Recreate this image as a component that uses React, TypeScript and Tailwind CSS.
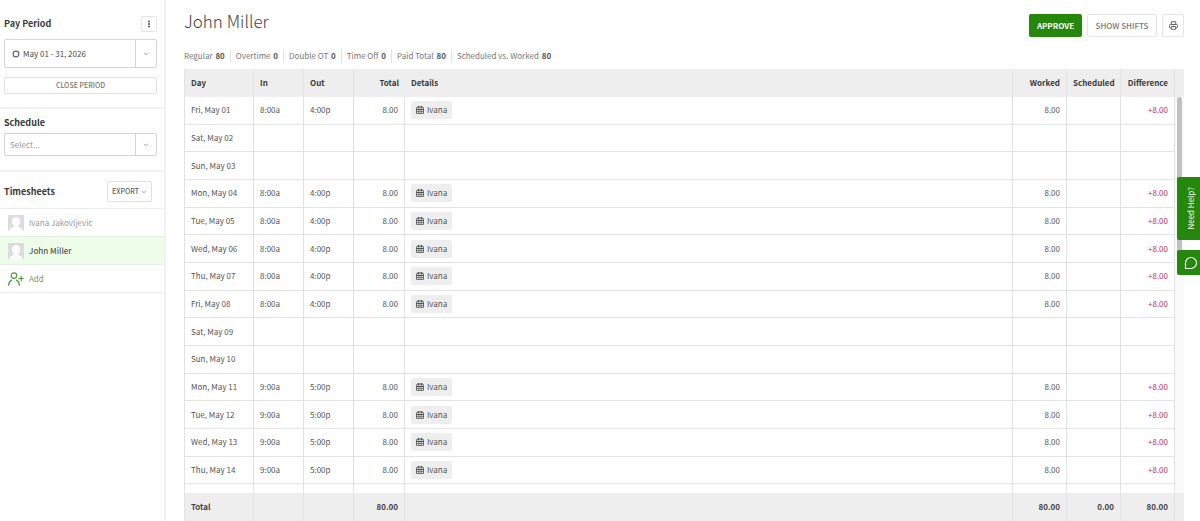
import { ReactNode } from 'react';
import clsx from 'clsx';

type Shift = { day: string; start?: string; end?: string; who?: string };

const SHIFTS: Shift[] = [
  { day: 'Fri, May 01', start: '8:00a', end: '4:00p', who: 'Ivana' },
  { day: 'Sat, May 02' },
  { day: 'Sun, May 03' },
  { day: 'Mon, May 04', start: '8:00a', end: '4:00p', who: 'Ivana' },
  { day: 'Tue, May 05', start: '8:00a', end: '4:00p', who: 'Ivana' },
  { day: 'Wed, May 06', start: '8:00a', end: '4:00p', who: 'Ivana' },
  { day: 'Thu, May 07', start: '8:00a', end: '4:00p', who: 'Ivana' },
  { day: 'Fri, May 08', start: '8:00a', end: '4:00p', who: 'Ivana' },
  { day: 'Sat, May 09' },
  { day: 'Sun, May 10' },
  { day: 'Mon, May 11', start: '9:00a', end: '5:00p', who: 'Ivana' },
  { day: 'Tue, May 12', start: '9:00a', end: '5:00p', who: 'Ivana' },
  { day: 'Wed, May 13', start: '9:00a', end: '5:00p', who: 'Ivana' },
  { day: 'Thu, May 14', start: '9:00a', end: '5:00p', who: 'Ivana' },
];

const SUMMARY = [
  ['Regular', '80'],
  ['Overtime', '0'],
  ['Double OT', '0'],
  ['Time Off', '0'],
  ['Paid Total', '80'],
  ['Scheduled vs. Worked', '80'],
];

function Chevron() {
  return (
    <svg viewBox="0 0 6 4" className="h-1 w-1.5" fill="none" stroke="#8a8a8a" strokeWidth="0.8">
      <path d="M1 0.8 3 2.8 5 0.8" />
    </svg>
  );
}

function CalendarIcon() {
  return (
    <svg viewBox="0 0 16 16" className="h-2 w-2" fill="none" stroke="#4a4a4a" strokeWidth="1.6">
      <path d="M1 14.800V4.500a2.500 2.500 0 0 1 2.500-2.500h9A2.500 2.500 0 0 1 15 4.500v10.300z" />
      <path d="M1 6.800h14" strokeWidth="2.200" />
      <path d="M1 10.800h14M5.700 6.500v8.300M10.300 6.500v8.300" strokeWidth="1.300" />
      <path d="M5 0.500v4M11 0.500v4" strokeWidth="2.800" />
    </svg>
  );
}

function PrinterIcon() {
  return (
    <svg viewBox="0 0 18 18" className="h-[9px] w-[9px]" fill="none" stroke="#555" strokeWidth="1.8" strokeLinejoin="round">
      <path d="M4.5 7V1.5h9V7" />
      <path d="M4.5 13.5H3A2 2 0 0 1 1 11.500V9a2 2 0 0 1 2-2h12a2 2 0 0 1 2 2v2.500a2 2 0 0 1-2 2h-1.500" />
      <path d="M4.500 11h9v5.500h-9z" />
    </svg>
  );
}

function Avatar() {
  return (
    <svg viewBox="0 0 16 16" className="h-4 w-4">
      <rect width="16" height="16" fill="#dcdcdc" />
      <path
        d="M8 2c2.600 0 4.200 1.700 4.200 4.200 0 1.900-.8 3.500-1.900 4.300v1c.3 1.200 2.900 1.300 4.100 2.600V16H1.600v-1.900c1.200-1.300 3.800-1.400 4.100-2.600v-1C4.600 9.700 3.800 8.100 3.800 6.200 3.800 3.700 5.400 2 8 2z"
        fill="#fff"
      />
    </svg>
  );
}

function AddUserIcon() {
  return (
    <svg viewBox="0 0 16 14" className="h-3.5 w-4" fill="none" stroke="#4f9638" strokeWidth="1.2" strokeLinecap="round">
      <circle cx="6" cy="3.600" r="2.800" />
      <path d="M0.700 13.300c0-2.700 1.100-4.400 2.900-5.200M11.300 13.300c0-2.700-1.100-4.400-2.900-5.200M13.200 4.300v4.400M11 6.500h4.400" />
    </svg>
  );
}

function SelectBox({ id, value, height, icon, muted }: { id: string; value: string; height: string; icon?: ReactNode; muted?: boolean }) {
  return (
    <div className={clsx('relative flex rounded-xs border border-[#d4d4d4] bg-white', height)}>
      {icon && <span className="pointer-events-none absolute inset-y-0 left-[7px] flex items-center">{icon}</span>}
      <select
        id={id}
        className={clsx('w-full appearance-none bg-transparent pr-6 text-[8px] outline-none', icon ? 'pl-[18px]' : 'pl-[5px]', muted ? 'text-[#999]' : 'text-[#4a4a4a]')}
      >
        <option>{value}</option>
      </select>
      <span className="pointer-events-none absolute inset-y-0 right-0 flex w-[21px] items-center justify-center border-l border-[#d4d4d4]">
        <Chevron />
      </span>
    </div>
  );
}

function Columns() {
  return (
    <colgroup>
      <col className="w-[69px]" />
      <col className="w-[50px]" />
      <col className="w-[50px]" />
      <col className="w-[51px]" />
      <col />
      <col className="w-[54px]" />
      <col className="w-[54px]" />
      <col className="w-[54px]" />
      <col className="w-[9px]" />
    </colgroup>
  );
}

const cell = 'border-r border-[#e2e2e2] px-1.5';

function Sidebar() {
  return (
    <aside className="w-[166px] shrink-0 border-r-2 border-[#f1f1f1] text-[#3a3a3a]">
      <section className="border-b-2 border-[#f1f1f1] pt-4 pr-[7px] pb-[13px] pl-1">
        <div className="flex h-4 items-center justify-between">
          <label htmlFor="period" className="text-[9px] font-bold">Pay Period</label>
          <button aria-label="Pay period options" className="flex h-4 w-4 items-center justify-center rounded-xs border border-[#e4e4e4]">
            <svg viewBox="0 0 2 8" className="h-2 w-0.5" fill="#444">
              <circle cx="1" cy="1.500" r="0.900" />
              <circle cx="1" cy="4" r="0.900" />
              <circle cx="1" cy="6.500" r="0.900" />
            </svg>
          </button>
        </div>
        <div className="mt-[7px]">
          <SelectBox
            id="period"
            value="May 01 - 31, 2026"
            height="h-[29px]"
            icon={
              <svg viewBox="0 0 8 8" className="h-2 w-2" fill="none" stroke="#666" strokeWidth="1.1">
                <circle cx="4" cy="4" r="2.900" />
                <path d="M0.700 6.700h1.300M6 1.300h1.300" strokeWidth="0.500" />
              </svg>
            }
          />
        </div>
        <button className="mt-[9px] h-[17px] w-full rounded-xs border border-[#e0e0e0] text-[7px] leading-none font-medium text-[#777]">
          CLOSE PERIOD
        </button>
      </section>

      <section className="border-b-2 border-[#f1f1f1] pt-2 pr-[7px] pb-3.5 pl-1">
        <label htmlFor="schedule" className="mb-1 block text-[9px] leading-3 font-bold">Schedule</label>
        <SelectBox id="schedule" value="Select..." height="h-[23px]" muted />
      </section>

      <section>
        <div className="flex items-center justify-between pt-[9px] pr-3 pb-1.5 pl-1">
          <h2 className="text-[9px] font-bold">Timesheets</h2>
          <button className="flex h-[21px] w-[45px] items-center justify-center gap-0.5 rounded-xs border border-[#e0e0e0] text-[7px] font-medium text-[#666]">
            EXPORT <Chevron />
          </button>
        </div>
        <ul className="text-[8px]">
          <li className="border-t border-[#ececec]">
            <a href="#ivana" className="flex h-[27px] items-center gap-[5px] pl-2 text-[#999]"><Avatar /> Ivana Jakovljevic</a>
          </li>
          <li className="border-t border-[#e4efe0] bg-[#edfde9]">
            <a href="#john" className="flex h-[27px] items-center gap-[5px] pl-2 font-medium text-[#555]"><Avatar /> John Miller</a>
          </li>
          <li className="border-y border-[#ececec]">
            <a href="#add" className="flex h-[27px] items-center gap-[5px] pl-2 text-[#6aa557]"><AddUserIcon /> Add</a>
          </li>
        </ul>
      </section>
    </aside>
  );
}

function Timesheet() {
  return (
    <div className="flex min-h-0 flex-1 flex-col text-[8px] text-[#555]">
      <table className="w-full shrink-0 table-fixed border-separate border-spacing-0 border-l border-[#e2e2e2] bg-[#eee] text-[#3a3a3a]">
        <Columns />
        <thead>
          <tr className="h-7 text-left">
            <th className={cell}>Day</th>
            <th className={cell}>In</th>
            <th className={cell}>Out</th>
            <th className="px-1.5 text-right">Total</th>
            <th className={cell}>Details</th>
            <th className={clsx(cell, 'text-right')}>Worked</th>
            <th className={clsx(cell, 'text-right')}>Scheduled</th>
            <th className={clsx(cell, 'text-right')}>Difference</th>
            <th />
          </tr>
        </thead>
      </table>

      <div className="relative min-h-0 flex-1 overflow-hidden">
        <table className="h-[415px] w-full table-fixed border-separate border-spacing-0 border-l border-[#e2e2e2]">
          <Columns />
          <tbody>
            {SHIFTS.map((s) => (
              <tr key={s.day} className="h-[27px] *:border-b *:border-[#e2e2e2]">
                <td className={cell}>{s.day}</td>
                <td className={cell}>{s.start}</td>
                <td className={cell}>{s.end}</td>
                <td className={clsx(cell, 'text-right')}>{s.who && '8.00'}</td>
                <td className={cell}>
                  {s.who && (
                    <span className="flex h-[18px] w-[41px] items-center gap-[3px] rounded-xs bg-[#eee] pl-[5px]">
                      <CalendarIcon /> {s.who}
                    </span>
                  )}
                </td>
                <td className={clsx(cell, 'text-right')}>{s.who && '8.00'}</td>
                <td className={cell} />
                <td className={clsx(cell, 'text-right text-[#c22f5c]')}>{s.who && '+8.00'}</td>
                <td className="border-b-0! bg-[#fafafa]" />
              </tr>
            ))}
            <tr className="h-[27px]">
              {[0, 1, 2, 3, 4, 5, 6, 7].map((i) => <td key={i} className={cell} />)}
              <td className="bg-[#fafafa]" />
            </tr>
          </tbody>
        </table>
        <div className="absolute top-0 right-0.5 h-[158px] w-[5px] rounded-full bg-[#c1c1c1]" />
      </div>

      <table className="w-full shrink-0 table-fixed border-separate border-spacing-0 border-l border-[#e2e2e2] bg-[#eee] font-bold text-[#444]">
        <Columns />
        <tbody>
          <tr className="h-7">
            <td className={cell}>Total</td>
            <td className={cell} />
            <td className={cell} />
            <td className={clsx(cell, 'text-right')}>80.00</td>
            <td className={cell} />
            <td className={clsx(cell, 'text-right')}>80.00</td>
            <td className={clsx(cell, 'text-right')}>0.00</td>
            <td className={clsx(cell, 'text-right')}>80.00</td>
            <td />
          </tr>
        </tbody>
      </table>
    </div>
  );
}

export default function App() {
  return (
    <div className="flex h-screen overflow-hidden bg-white font-['Noto_Sans_CJK_SC',sans-serif]">
      <Sidebar />

      <main className="flex min-w-0 flex-1 flex-col pr-4 pl-[18px]">
        <header className="flex items-start justify-between">
          <h1 className="pt-[7px] text-[17px] leading-7 font-light text-[#444]">John Miller</h1>
          <div className="flex gap-[5px] pt-3.5 text-[8px]">
            <button className="h-[23px] w-[53px] rounded-xs bg-[#26870d] font-bold text-white">APPROVE</button>
            <button className="h-[23px] w-[70px] rounded-xs border border-[#e4e4e4] font-medium text-[#777]">SHOW SHIFTS</button>
            <button aria-label="Print" className="flex h-[23px] w-[22px] items-center justify-center rounded-xs border border-[#e4e4e4]">
              <PrinterIcon />
            </button>
          </div>
        </header>

        <ul className="mt-3 mb-1.5 flex text-[8px] leading-[14px] text-[#777]">
          {SUMMARY.map(([label, value]) => (
            <li key={label} className="mr-[5px] border-r border-[#e2e2e2] pr-[5px] last:border-0">
              {label} <strong className="ml-px text-[#555]">{value}</strong>
            </li>
          ))}
        </ul>

        <Timesheet />
      </main>

      <div className="fixed top-[177px] right-0 flex w-[23px] flex-col gap-2.5">
        <button className="flex h-[63px] items-center justify-center rounded-l-xs bg-[#26870d] pl-1 text-[8px] text-white">
          <span className="rotate-180 [writing-mode:vertical-rl]">Need Help?</span>
        </button>
        <button aria-label="Open chat" className="flex h-[25px] items-center justify-center rounded-l-xs bg-[#26870d] pl-1">
          <svg viewBox="0 0 14 14" className="h-3.5 w-3.5" fill="none" stroke="#fff" strokeWidth="1.2" strokeLinejoin="round">
            <path d="M1.500 12.500V7A5.500 5.500 0 1 1 7 12.500z" />
          </svg>
        </button>
      </div>
    </div>
  );
}
